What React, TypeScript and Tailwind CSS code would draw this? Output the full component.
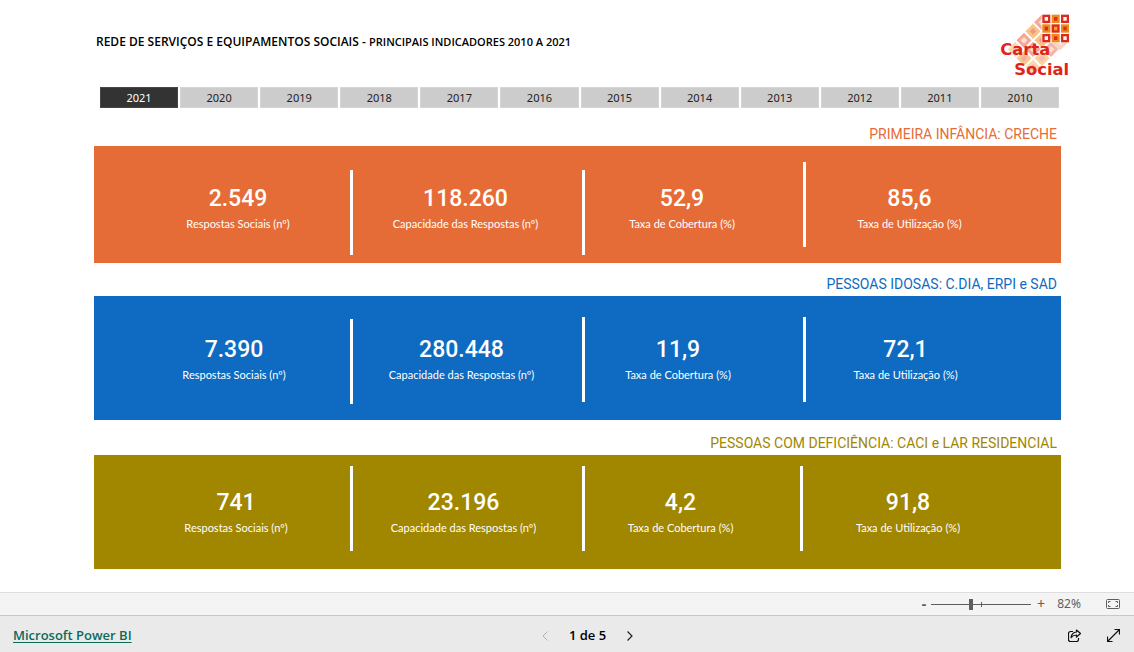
import { useState } from "react";

type Metric = { value: string; label: string; cell: string; divider?: string };
type Band = { title: string; color: string; heading: string; body: string; metrics: Metric[] };

const years = [2021, 2020, 2019, 2018, 2017, 2016, 2015, 2014, 2013, 2012, 2011, 2010];

const labels = [
  "Respostas Sociais (nº)",
  "Capacidade das Respostas (nº)",
  "Taxa de Cobertura (%)",
  "Taxa de Utilização (%)",
];

const bands: Band[] = [
  {
    title: "PRIMEIRA INFÂNCIA: CRECHE",
    color: "text-[#e66c37]",
    heading: "h-[38px]",
    body: "h-[117px] grid-cols-[259fr_232fr_221fr_255fr] bg-[#e66c37] pt-9",
    metrics: [
      { value: "2.549", label: labels[0], cell: "pl-8", divider: "-mt-3" },
      { value: "118.260", label: labels[1], cell: "pr-1", divider: "-mt-3" },
      { value: "52,9", label: labels[2], cell: "pr-6", divider: "-mt-5" },
      { value: "85,6", label: labels[3], cell: "pr-12" },
    ],
  },
  {
    title: "PESSOAS IDOSAS: C.DIA, ERPI e SAD",
    color: "text-[#0e6bc1]",
    heading: "h-[33px]",
    body: "h-[124px] grid-cols-[259fr_232fr_221fr_255fr] bg-[#0e6bc1] pt-[37px]",
    metrics: [
      { value: "7.390", label: labels[0], cell: "pl-6", divider: "-mt-[14px]" },
      { value: "280.448", label: labels[1], cell: "pr-3", divider: "-mt-4" },
      { value: "11,9", label: labels[2], cell: "pr-8", divider: "-mt-4" },
      { value: "72,1", label: labels[3], cell: "pr-14" },
    ],
  },
  {
    title: "PESSOAS COM DEFICIÊNCIA: CACI e LAR RESIDENCIAL",
    color: "text-[#a18600]",
    heading: "h-[35px]",
    body: "h-[114px] grid-cols-[259fr_232fr_218fr_258fr] bg-[#a18600] pt-[31px]",
    metrics: [
      { value: "741", label: labels[0], cell: "pl-7", divider: "-mt-5" },
      { value: "23.196", label: labels[1], cell: "pr-2", divider: "-mt-5" },
      { value: "4,2", label: labels[2], cell: "pr-6", divider: "-mt-5" },
      { value: "91,8", label: labels[3], cell: "pr-12" },
    ],
  },
];

const diamonds = [
  [185, 52, "#f5a79b", "#fbdcd2"], [159, 79, "#f8c582", "#f4978b"], [132, 106, "#f5a59b", "#fbe3c4"],
  [106, 133, "#fad9a8", "#f8c4b8"], [186, 106, "#f8c582", "#f4978b"], [159, 133, "#f5a59b", "#fbe3c4"],
  [132, 160, "#f8c98c", "#f6a99e"], [213, 79, "#f7b9ae", "#fbdcd2"], [213, 133, "#f6b3ab", "#fbe3c4"],
  [186, 160, "#f9d3a0", "#f8b9ae"], [159, 187, "#fad9a8", "#f6b3ab"], [240, 114, "#f9d3c0", "#fbe6da"],
] as const;

function Logo() {
  return (
    <svg viewBox="60 24 210 198" className="h-[66px] w-[70px]" role="img" aria-label="Carta Social">
      {diamonds.map(([x, y, outer, inner]) => (
        <g key={`${x}-${y}`} transform={`translate(${x} ${y}) rotate(45)`}>
          <rect x="-16" y="-16" width="32" height="32" fill={outer} />
          <rect x="-7" y="-7" width="14" height="14" fill={inner} />
        </g>
      ))}
      <rect x="184" y="26" width="84" height="88" fill="#fff" opacity=".6" />
      {[0, 1, 2].map((r) =>
        [0, 1, 2].map((c) => {
          const corner = r !== 1 && c !== 1;
          const center = r === 1 && c === 1;
          const x = 187 + c * 28;
          const y = 29 + r * 29;
          return (
            <g key={`${r}${c}`}>
              <rect x={x} y={y} width="24" height="25" fill={corner || center ? "#dc2a1c" : "#ee8a1d"} />
              <rect x={x + 7} y={y + 7} width="10" height="11" fill={corner ? "#fff" : center ? "#f3a01f" : "#dc2a1c"} />
            </g>
          );
        }),
      )}
      <g fill="#e0241c" fontFamily="'DejaVu Sans', sans-serif" fontWeight="700" fontSize="49">
        <text x="61" y="151">Carta</text>
        <text x="103" y="210">Social</text>
      </g>
    </svg>
  );
}

export default function App() {
  const [year, setYear] = useState(2021);
  const [zoom, setZoom] = useState(82);
  return (
    <div className="flex min-h-screen flex-col bg-white font-['Noto_Sans',sans-serif] text-black">
      <main className="flex-1 pr-[73px] pb-5 pl-[94px]">
        <header className="flex h-[87px] items-start justify-between pl-[2px]">
          <h1 className="pt-8 font-['Open_Sans',sans-serif] text-[12px] leading-5 font-semibold">
            REDE DE SERVIÇOS E EQUIPAMENTOS SOCIAIS - <span className="text-[11px]">PRINCIPAIS INDICADORES 2010 A 2021</span>
          </h1>
          <div className="-mr-[9px] pt-[13px]">
            <Logo />
          </div>
        </header>
        <div className="mr-[2px] ml-[6px] grid grid-cols-12 gap-[2px]" role="group" aria-label="Ano">
          {years.map((y) => (
            <button
              key={y}
              type="button"
              aria-pressed={y === year}
              onClick={() => setYear(y)}
              className={
                y === year
                  ? "h-[21px] border border-[#484644] bg-[#333] text-[11px] leading-none text-white"
                  : "h-[21px] border border-[#d4d4d4] bg-[#ccc] text-[11px] leading-none text-[#222]"
              }
            >
              {y}
            </button>
          ))}
        </div>
        {bands.map((b) => (
          <section key={b.title} className="font-[Roboto,sans-serif]">
            <div className={`flex items-end justify-end pr-1 pb-[2px] ${b.heading}`}>
              <h2 className={`text-[14px] leading-5 ${b.color}`}>{b.title}</h2>
            </div>
            <dl className={`grid text-white ${b.body}`}>
              {b.metrics.map((m) => (
                <div key={m.label} className="flex items-start">
                  <div className={`flex flex-1 flex-col-reverse text-center ${m.cell}`}>
                    <dt className="font-[Lato,sans-serif] text-[11px] leading-4">{m.label}</dt>
                    <dd className="text-[23px] leading-[34px] font-medium">{m.value}</dd>
                  </div>
                  {m.divider && <span aria-hidden="true" className={`h-[85px] w-[3px] bg-white ${m.divider}`} />}
                </div>
              ))}
            </dl>
          </section>
        ))}
      </main>
      <div className="flex h-[23px] items-center justify-end border-t border-[#dedede] bg-[#f4f4f4] pr-[14px] text-[12px] text-[#605e5c]">
        <button type="button" aria-label="Reduzir" className="w-[14px] text-[14px] leading-4 font-bold" onClick={() => setZoom(Math.max(10, zoom - 10))}>
          -
        </button>
        <input
          type="range"
          aria-label="Zoom"
          min={10}
          max={190}
          value={zoom}
          onChange={(e) => setZoom(Number(e.target.value))}
          className="h-[11px] w-[100px] appearance-none bg-[linear-gradient(#605e5c,#605e5c),linear-gradient(#605e5c,#605e5c)] bg-[length:100%_1px,1px_5px] bg-center bg-no-repeat [&::-webkit-slider-thumb]:h-[11px] [&::-webkit-slider-thumb]:w-1 [&::-webkit-slider-thumb]:appearance-none [&::-webkit-slider-thumb]:bg-[#605e5c]"
        />
        <button type="button" aria-label="Ampliar" className="w-5 text-[14px] leading-4" onClick={() => setZoom(Math.min(190, zoom + 10))}>
          +
        </button>
        <span className="w-9 text-center">{zoom}%</span>
        <button type="button" aria-label="Ajustar à página" className="ml-[19px]">
          <svg viewBox="0 0 14 10" className="h-[10px] w-[14px]" fill="none" stroke="#605e5c">
            <rect x=".5" y=".5" width="13" height="9" rx="1" />
            <path d="M2.5 4V2.5H4.5M9.5 2.5H11.5V4M11.5 6V7.5H9.5M4.5 7.5H2.5V6" />
          </svg>
        </button>
      </div>
      <footer className="grid h-[37px] grid-cols-3 items-center border-t border-[#c8c8c8] bg-[#eaeaea] pt-[3px] pr-[14px] pl-[13px]">
        <a href="#powerbi" className="justify-self-start font-['Open_Sans',sans-serif] text-[13px] font-semibold text-[#0b6a5d] underline underline-offset-2">
          Microsoft Power BI
        </a>
        <nav className="flex items-center justify-center gap-[21px] pl-[42px] font-['Open_Sans',sans-serif] text-[13px] font-semibold" aria-label="Páginas">
          <button type="button" aria-label="Página anterior" disabled>
            <svg viewBox="0 0 6 10" className="h-[10px] w-[6px]" fill="none" stroke="#b0b0b0">
              <path d="M5.5 .5 1 5l4.5 4.5" />
            </svg>
          </button>
          <span>1 de 5</span>
          <button type="button" aria-label="Página seguinte">
            <svg viewBox="0 0 6 10" className="h-[10px] w-[6px]" fill="none" stroke="#222" strokeWidth="1.2">
              <path d="M.5 .5 5 5 .5 9.5" />
            </svg>
          </button>
        </nav>
        <div className="flex items-center gap-[26px] justify-self-end">
          <button type="button" aria-label="Partilhar">
            <svg viewBox="0 0 13 13" className="h-[13px] w-[13px]" fill="none" stroke="#111" strokeWidth="1.2" strokeLinejoin="round">
              <path d="M5 2.5H2.5a2 2 0 0 0-2 2v6a2 2 0 0 0 2 2h6a2 2 0 0 0 2-2V9" />
              <path d="M8.5 1 12.5 4.5 8.5 8V6C6 6 4.5 6.7 3 8.5 3.5 5 5.5 3.2 8.5 3Z" />
            </svg>
          </button>
          <button type="button" aria-label="Ecrã inteiro">
            <svg viewBox="0 0 13 13" className="h-[13px] w-[13px]" fill="none" stroke="#111" strokeWidth="1.2">
              <path d="M1 12 12 1M7.5.5h5v5M.5 7.5v5h5" />
            </svg>
          </button>
        </div>
      </footer>
    </div>
  );
}
